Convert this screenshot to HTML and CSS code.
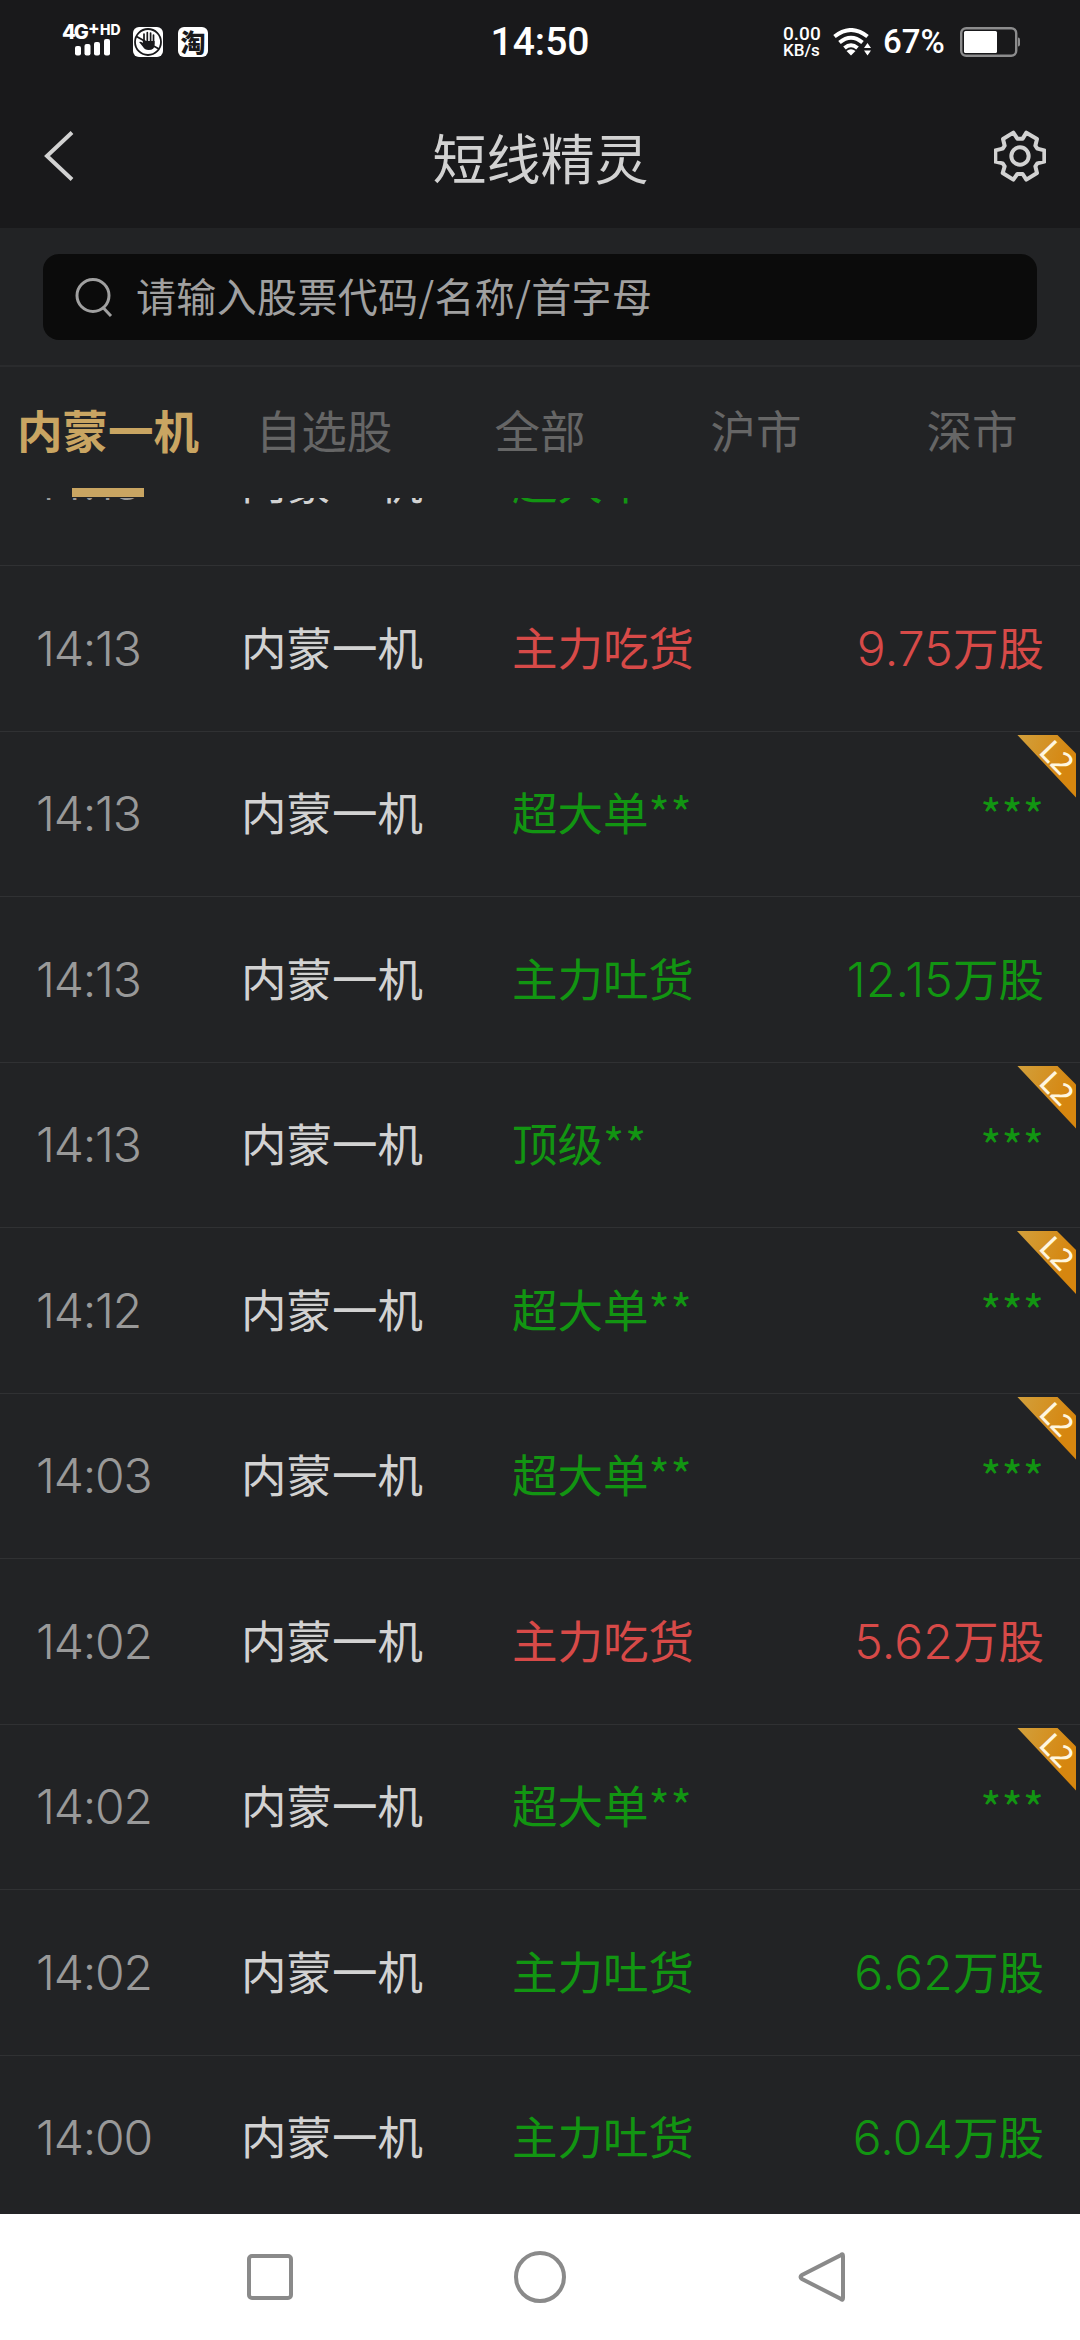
FILE: index.html
```html
<!DOCTYPE html>
<html lang="zh-CN">
<head>
<meta charset="utf-8">
<title>短线精灵</title>
<link rel="stylesheet" href="styles.css">
</head>
<body>
<div class="screen">
  <header class="top">
    <div class="status">
      <div class="status-left">
        <div class="network">
          <div class="network-label"><span class="gen">4G</span><span class="plus">+</span><span class="hd">HD</span></div>
          <svg class="bars" width="36" height="17" viewBox="0 0 36 17" fill="#fff"><rect x="0" y="7" width="6" height="9.500" rx="2"/><rect x="9.500" y="5" width="6" height="11.500" rx="2"/><rect x="19" y="3" width="6" height="13.500" rx="2"/><rect x="29" y="0" width="6" height="16.500" rx="2"/></svg>
        </div>
        <svg class="hand" width="30" height="30" viewBox="0 0 30 30"><rect width="30" height="30" rx="6" fill="#fff"/><g fill="none" stroke="#19191b"><circle cx="15" cy="15" r="13" stroke-width="1.800"/><path d="M11 17V7M14.300 16V5.500M17.600 16V6M20.500 17V8" stroke-width="1.700" stroke-linecap="round"/><path d="M3.500 9.500L26 22" stroke-width="1.800"/></g><path d="M9.800 14h11.800v3.500q0 5.500-6 5.500q-4 0-5.500-3l-4-5q1.500-1 3.700 1z" fill="#19191b"/></svg>
        <div class="tao">淘</div>
      </div>
      <div class="clock">14:50</div>
      <div class="status-right">
        <div class="speed"><span>0.00</span><span class="unit">KB/s</span></div>
        <svg class="wifi" width="39" height="29" viewBox="0 0 39 29"><g fill="none" stroke="#fff" stroke-width="4"><path d="M1.500 8.500Q18 -4.500 34.500 8.500"/><path d="M6.500 14.500Q18 5 29.500 14.500"/><path d="M11.500 20Q18 14.500 24.500 20"/></g><path d="M13.500 23Q18 19.500 22.500 23L18 27.500z" fill="#fff"/><path d="M31 20l3.500-5 3.500 5zM31 22.500l3.500 5 3.500-5z" fill="#fff"/></svg>
        <div class="percent">67%</div>
        <svg class="battery" width="61" height="30" viewBox="0 0 61 30"><rect x="1.200" y="1.200" width="55" height="27.600" rx="5" fill="none" stroke="#8c8c8d" stroke-width="2.400"/><rect x="4" y="4" width="33" height="22" rx="1.500" fill="#fff"/><path d="M58 10.500q2 0 2 2v5q0 2-2 2z" fill="#8c8c8d"/></svg>
      </div>
    </div>
    <div class="titlebar">
      <svg class="back" width="34" height="52" viewBox="0 0 34 52"><path d="M29 2.500L4 26l25 23.500" fill="none" stroke="#d2d2d2" stroke-width="4"/></svg>
      <h1 class="title">短线精灵</h1>
      <svg class="gear" width="52" height="52" viewBox="102 90 156 156" fill="none" stroke="#d2d2d2" stroke-width="12" stroke-linejoin="round"><path d="M172 116H188L199 98L231 117L226 137L232 146L253 151V185L232 190L226 199L231 219L199 239L188 222H172L160 239L128 219L134 199L128 190L106 185V151L128 146L134 137L129 117L160 98Z"/><circle cx="180" cy="168" r="26"/></svg>
    </div>
  </header>

  <div class="search-area">
    <div class="search">
      <svg width="38" height="39" viewBox="0 0 38 39" fill="none" stroke="#a0a0a0" stroke-width="3"><circle cx="18" cy="17.500" r="16"/><path d="M28 29.500l8 8.500"/></svg>
      <span class="placeholder">请输入股票代码/名称/首字母</span>
    </div>
  </div>

  <nav class="tabs">
    <div class="tab active">内蒙一机</div>
    <div class="tab">自选股</div>
    <div class="tab">全部</div>
    <div class="tab">沪市</div>
    <div class="tab">深市</div>
  </nav>

  <main class="list">
    <div class="row fall"><span class="time">14:13</span><span class="name">内蒙一机</span><span class="event">超大单<i>**</i></span><span class="amount"><i>***</i></span></div>
    <div class="row rise"><span class="time">14:13</span><span class="name">内蒙一机</span><span class="event">主力吃货</span><span class="amount"><b>9.75</b>万股</span></div>
    <div class="row fall"><span class="time">14:13</span><span class="name">内蒙一机</span><span class="event">超大单<i>**</i></span><span class="amount"><i>***</i></span><div class="badge"><span>L2</span></div></div>
    <div class="row fall"><span class="time">14:13</span><span class="name">内蒙一机</span><span class="event">主力吐货</span><span class="amount"><b>12.15</b>万股</span></div>
    <div class="row fall"><span class="time">14:13</span><span class="name">内蒙一机</span><span class="event">顶级<i>**</i></span><span class="amount"><i>***</i></span><div class="badge"><span>L2</span></div></div>
    <div class="row fall"><span class="time">14:12</span><span class="name">内蒙一机</span><span class="event">超大单<i>**</i></span><span class="amount"><i>***</i></span><div class="badge"><span>L2</span></div></div>
    <div class="row fall"><span class="time">14:03</span><span class="name">内蒙一机</span><span class="event">超大单<i>**</i></span><span class="amount"><i>***</i></span><div class="badge"><span>L2</span></div></div>
    <div class="row rise"><span class="time">14:02</span><span class="name">内蒙一机</span><span class="event">主力吃货</span><span class="amount"><b>5.62</b>万股</span></div>
    <div class="row fall"><span class="time">14:02</span><span class="name">内蒙一机</span><span class="event">超大单<i>**</i></span><span class="amount"><i>***</i></span><div class="badge"><span>L2</span></div></div>
    <div class="row fall"><span class="time">14:02</span><span class="name">内蒙一机</span><span class="event">主力吐货</span><span class="amount"><b>6.62</b>万股</span></div>
    <div class="row fall"><span class="time">14:00</span><span class="name">内蒙一机</span><span class="event">主力吐货</span><span class="amount"><b>6.04</b>万股</span></div>
  </main>

  <footer class="navbar">
    <svg width="54" height="54" viewBox="0 0 54 54"><rect x="6" y="6" width="42" height="42" rx="3"/></svg>
    <svg width="54" height="54" viewBox="0 0 54 54"><circle cx="27" cy="27" r="24"/></svg>
    <svg width="54" height="54" viewBox="0 0 54 54"><path d="M45 5Q47 3 47 6V48Q47 51 45 49L6 29Q3 27 6 25Z"/></svg>
  </footer>
</div>
</body>
</html>
```
FILE: styles.css
```css
* {
  box-sizing: border-box;
}

body {
  margin: 0;
  background: #222325;
  font-family: "Noto Sans CJK SC", sans-serif;
}

.screen {
  display: flex;
  flex-direction: column;
  width: 1080px;
  height: 2340px;
  overflow: hidden;
}

.top {
  height: 228px;
  background: #19191b;
}

/* Status bar */
.status {
  display: grid;
  grid-template-columns: 1fr 110px 1fr;
  align-items: center;
  height: 84px;
  color: #fff;
  font-family: Roboto, sans-serif;
}

.status-left {
  display: flex;
  align-items: center;
  padding-left: 62px;
}

.network {
  display: flex;
  flex-direction: column;
  width: 71px;
  padding-bottom: 4px;
}

.network-label {
  display: flex;
  height: 16px;
  font-family: Inter, sans-serif;
  font-weight: 800;
  line-height: 16px;
}

.gen {
  width: 26px;
  font-size: 20px;
  letter-spacing: -2px;
}

.plus {
  width: 12px;
  font-size: 17px;
  line-height: 9px;
}

.hd {
  font-size: 14px;
  line-height: 11px;
}

.bars {
  margin-left: 13px;
  margin-top: -1px;
}

.tao {
  width: 30px;
  height: 30px;
  margin-left: 15px;
  border-radius: 6px;
  background: #fff;
  color: #19191b;
  font: 900 25px/29px "Noto Sans CJK SC", sans-serif;
  text-align: center;
}

.clock {
  font-size: 39px;
  font-weight: 500;
  line-height: 42px;
  text-align: center;
}

.status-right {
  display: flex;
  align-items: center;
  padding-left: 188px;
}

.speed {
  display: flex;
  flex-direction: column;
  flex: none;
  width: 50px;
  font-size: 19px;
  font-weight: 500;
  line-height: 16px;
}

.unit {
  font-size: 17px;
}

.wifi,
.battery {
  flex: none;
}

.percent {
  flex: none;
  width: 88px;
  padding-left: 11px;
  font-size: 33px;
  font-weight: 500;
  line-height: 40px;
}

/* Title bar */
.titlebar {
  display: grid;
  grid-template-columns: 52px 1fr 52px;
  align-items: center;
  height: 144px;
  padding: 0 34px 0 43px;
}

.title {
  margin: 1px 0 0 -8px;
  color: #d2d2d2;
  font-size: 54px;
  font-weight: 400;
  line-height: 80px;
  text-align: center;
}

/* Search */
.search-area {
  height: 139px;
  padding: 26px 43px 0;
  border-bottom: 2px solid #2a2b2d;
}

.search {
  display: flex;
  align-items: center;
  gap: 23px;
  height: 86px;
  padding-left: 32px;
  border-radius: 16px;
  background: #0b0b0b;
}

.placeholder {
  padding-bottom: 4px;
  color: #a0a0a0;
  font-size: 40px;
  letter-spacing: 0.35px;
  line-height: 60px;
}

/* Tabs */
.tabs {
  display: grid;
  grid-template-columns: repeat(5, 1fr);
  height: 131px;
}

.tab {
  display: flex;
  flex-direction: column;
  align-items: center;
  justify-content: space-between;
  padding-top: 30px;
  color: #666;
  font-size: 45.5px;
  line-height: 64px;
  white-space: nowrap;
}

.active {
  color: #c9a562;
  font-weight: 700;
}

.active::after {
  content: "";
  width: 72px;
  height: 9px;
  margin-bottom: 1px;
  background: #c9a562;
}

/* Event list */
.list {
  height: 1716px;
  overflow: hidden;
}

.row {
  position: relative;
  display: grid;
  grid-template-columns: 205px 271px 1fr auto;
  align-items: center;
  height: 165.5px;
  padding: 0 36px;
  border-bottom: 1px solid #303133;
  font-size: 45.5px;
  line-height: 66px;
}

.row:first-child {
  margin-top: -97.5px;
}

.time {
  padding-top: 1px;
  color: #999;
}

.time,
.amount b {
  font-family: Inter, sans-serif;
  font-size: 48px;
  font-weight: 350;
  letter-spacing: -1.2px;
}

.amount b {
  letter-spacing: 0.2px;
}

.name,
.event {
  padding-bottom: 5px;
}

.amount {
  padding-bottom: 2px;
}

.name {
  color: #d2d2d2;
}

.rise {
  color: #d74a48;
}

.fall {
  color: #129512;
}

.row i {
  font-style: normal;
}

.event i {
  letter-spacing: 0.8px;
}

.badge {
  position: absolute;
  top: 3px;
  right: 4px;
  width: 59px;
  height: 63px;
  background: linear-gradient(110deg, #d2a03c, #d6860f 75%);
  clip-path: polygon(0 0, 40px 0, 59px 19px, 59px 63px);
}

.badge span {
  position: absolute;
  top: 6px;
  left: 21px;
  width: 38px;
  color: #fff6df;
  font: 500 30px/32px "Noto Sans", sans-serif;
  text-align: center;
  transform: rotate(46deg);
}

/* System navigation */
.navbar {
  display: flex;
  flex: 1;
  gap: 216px;
  padding: 36px 0 0 243px;
  background: #fff;
}

.navbar svg {
  fill: none;
  stroke: #8a8a8a;
  stroke-width: 4;
}

.navbar svg:last-child {
  margin-left: 13px;
}
```
